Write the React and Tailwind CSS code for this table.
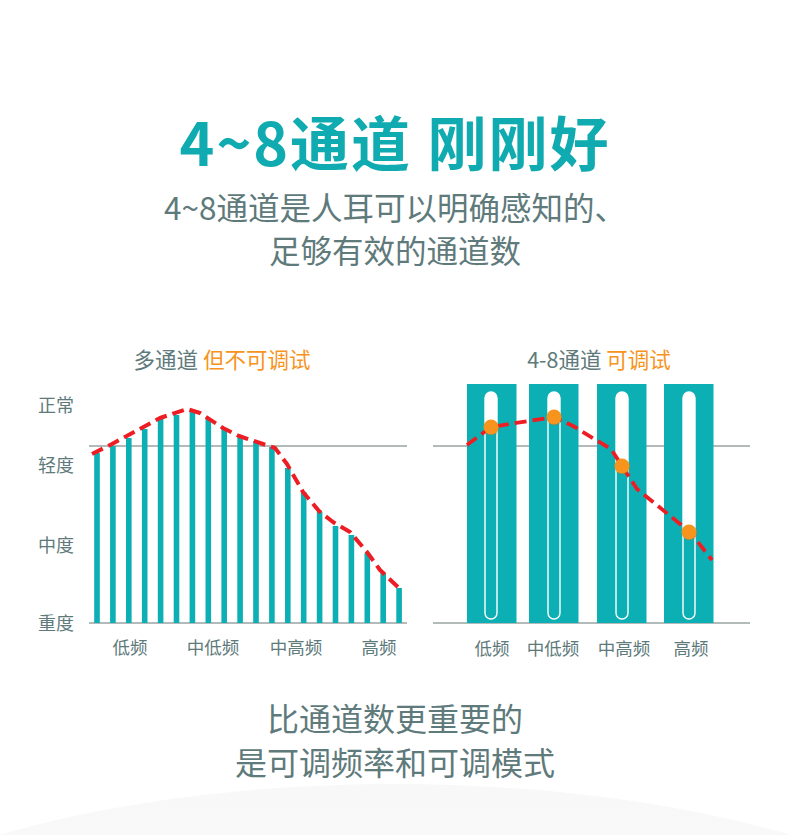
import React from 'react'

const FONT = '"Noto Sans CJK SC", "Noto Sans", sans-serif'
const GRAY = '#5e7a7b'
const TEAL = '#0cafb4'
const RED = '#ee1d24'
const ORANGE = '#f7941d'

// left chart bar tops (local y), base at 252
const barTops = [82, 75, 67, 58, 48, 44, 40, 48, 58, 65, 70, 76, 97, 121, 141, 155, 164, 182, 202, 217]

const leftCurve = [
    [92, 83], [112, 73], [160, 47], [187, 38], [200, 42], [223, 57], [239, 65],
    [263, 73], [275, 77], [287, 93], [303, 121], [319, 140], [333, 151],
    [350, 161], [367, 181], [380, 199], [399, 217],
]

const columns = [
    { x: 47, cx: 71, knob: 56, label: '低频', lx: 72 },
    { x: 109, cx: 134, knob: 46, label: '中低频', lx: 133 },
    { x: 177, cx: 202, knob: 95, label: '中高频', lx: 204 },
    { x: 244, cx: 269, knob: 161, label: '高频', lx: 271 },
]

const rightCurve = [
    [47, 74], [71, 56], [134, 46], [153, 55], [191, 78], [202, 95], [217, 118],
    [270, 161], [292, 189],
]

const toPoints = (pts) => pts.map((p) => p.join(',')).join(' ')

const LeftChart = () => (
    <svg width="420" height="300" viewBox="0 0 420 300">
        {[
            ['正常', 33],
            ['轻度', 93],
            ['中度', 173],
            ['重度', 251],
        ].map(([t, y]) => (
            <text key={t} x="56" y={y} fontSize="18" fill={GRAY} fontFamily={FONT} textAnchor="middle" dominantBaseline="central">
                {t}
            </text>
        ))}
        <line x1="89" y1="75" x2="407" y2="75" stroke="#9aa3a3" strokeWidth="1.3" />
        <line x1="89" y1="252" x2="407" y2="252" stroke="#9aa3a3" strokeWidth="1.3" />
        {barTops.map((top, i) => (
            <rect key={i} x={97 + i * 15.9 - 2.8} y={top} width="5.6" height={252 - top} fill={TEAL} />
        ))}
        <polyline
            points={toPoints(leftCurve)}
            fill="none"
            stroke={RED}
            strokeWidth="4"
            strokeDasharray="12 6"
            strokeLinejoin="round"
        />
        {[
            ['低频', 130],
            ['中低频', 213],
            ['中高频', 296],
            ['高频', 379],
        ].map(([t, x]) => (
            <text key={t} x={x} y="275" fontSize="17.5" fill={GRAY} fontFamily={FONT} textAnchor="middle" dominantBaseline="central">
                {t}
            </text>
        ))}
    </svg>
)

const RightChart = () => (
    <svg width="370" height="300" viewBox="0 0 370 300">
        <line x1="13" y1="75" x2="330" y2="75" stroke="#9aa3a3" strokeWidth="1.3" />
        <line x1="13" y1="252" x2="330" y2="252" stroke="#9aa3a3" strokeWidth="1.3" />
        {columns.map((c) => (
            <g key={c.label}>
                <rect x={c.x} y="13" width="49.5" height="239" fill={TEAL} />
                <rect x={c.cx - 6} y="21" width="12" height="227" rx="6" fill="none" stroke="#ffffff" strokeWidth="1.4" />
                <rect x={c.cx - 6} y="21" width="12" height={c.knob - 21} rx="6" fill="#ffffff" />
                <rect x={c.cx - 6} y={c.knob - 10} width="12" height="10" fill="#ffffff" />
            </g>
        ))}
        <polyline
            points={toPoints(rightCurve)}
            fill="none"
            stroke={RED}
            strokeWidth="3.8"
            strokeDasharray="12 6"
            strokeLinejoin="round"
        />
        {columns.map((c) => (
            <g key={c.label + 'k'}>
                <circle cx={c.cx + 0.6} cy={c.knob + 0.8} r="7.6" fill="#c86f10" opacity="0.35" />
                <circle cx={c.cx} cy={c.knob} r="7.5" fill={ORANGE} />
            </g>
        ))}
        {columns.map((c) => (
            <text key={c.label + 't'} x={c.lx} y="276" fontSize="17.5" fill={GRAY} fontFamily={FONT} textAnchor="middle" dominantBaseline="central">
                {c.label}
            </text>
        ))}
    </svg>
)

export default function App() {
    return (
        <div
            className="relative w-[790px] h-[835px] overflow-hidden bg-white"
            style={{ fontFamily: FONT }}
        >
            <div className="absolute left-[-260px] top-[784px] w-[1310px] h-[500px] rounded-[50%] bg-gradient-to-b from-[#f8f8f8] to-white" />

            <div className="relative flex flex-col items-center">
                <h1 className="mt-[108px] text-[59px] leading-[66px] font-bold tracking-[2px] text-[#10abb0]">
                    4~8通道 刚刚好
                </h1>
                <p className="mt-[11px] text-[31.5px] leading-[43px] text-[#5e7a7b]">
                    4~8通道是人耳可以明确感知的、
                </p>
                <p className="text-[31.5px] leading-[43px] text-[#5e7a7b]">
                    足够有效的通道数
                </p>

                <div className="mt-[76px] flex w-full">
                    <div className="w-[444px] text-center text-[21.5px] leading-[24px] text-[#5e7a7b]">
                        多通道 <span className="text-[#f7941d]">但不可调试</span>
                    </div>
                    <div className="w-[310px] text-center text-[21.5px] leading-[24px] text-[#5e7a7b]">
                        4-8通道 <span className="text-[#f7941d]">可调试</span>
                    </div>
                </div>

                <div className="flex w-full">
                    <LeftChart />
                    <RightChart />
                </div>

                <div className="mt-[24px] flex flex-col items-center text-[32px] leading-[44px] text-[#5e7a7b]">
                    <p>比通道数更重要的</p>
                    <p>是可调频率和可调模式</p>
                </div>
            </div>
        </div>
    )
}
